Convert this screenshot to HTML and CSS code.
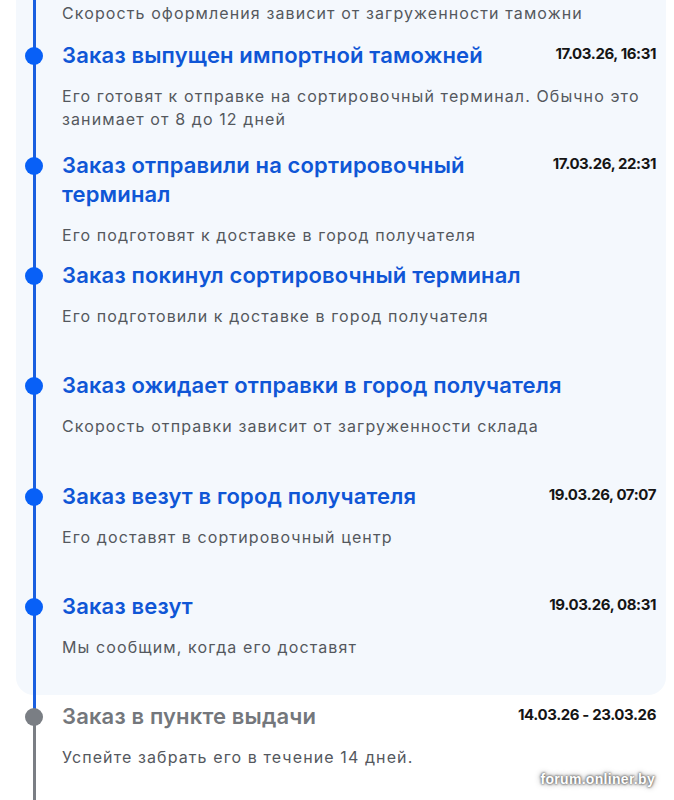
FILE: index.html
```html
<!DOCTYPE html>
<html lang="ru">
<head>
<meta charset="utf-8">
<title>Отслеживание заказа</title>
<link rel="stylesheet" href="styles.css">
</head>
<body>
<div class="page">
  <div class="card">
    <div class="item item--lead">
      <p class="desc">Скорость оформления зависит от загруженности таможни</p>
    </div>
    <div class="item">
      <div class="head"><h3 class="title">Заказ выпущен импортной таможней</h3><span class="date">17.03.26, 16:31</span></div>
      <p class="desc">Его готовят к отправке на сортировочный терминал. Обычно это занимает от 8 до 12 дней</p>
    </div>
    <div class="item">
      <div class="head"><h3 class="title">Заказ отправили на сортировочный терминал</h3><span class="date">17.03.26, 22:31</span></div>
      <p class="desc">Его подготовят к доставке в город получателя</p>
    </div>
    <div class="item">
      <div class="head"><h3 class="title">Заказ покинул сортировочный терминал</h3></div>
      <p class="desc">Его подготовили к доставке в город получателя</p>
    </div>
    <div class="item">
      <div class="head"><h3 class="title">Заказ ожидает отправки в город получателя</h3></div>
      <p class="desc">Скорость отправки зависит от загруженности склада</p>
    </div>
    <div class="item">
      <div class="head"><h3 class="title">Заказ везут в город получателя</h3><span class="date">19.03.26, 07:07</span></div>
      <p class="desc">Его доставят в сортировочный центр</p>
    </div>
    <div class="item item--last">
      <div class="head"><h3 class="title">Заказ везут</h3><span class="date">19.03.26, 08:31</span></div>
      <p class="desc">Мы сообщим, когда его доставят</p>
    </div>
  </div>
  <div class="item item--pending">
    <div class="head"><h3 class="title">Заказ в пункте выдачи</h3><span class="date">14.03.26 - 23.03.26</span></div>
    <p class="desc">Успейте забрать его в течение 14 дней.</p>
  </div>
  <div class="watermark">forum.onliner.by</div>
</div>
</body>
</html>
```
FILE: styles.css
```css
* { box-sizing: border-box; }
html, body { margin: 0; padding: 0; background: #ffffff; }
body { height: 800px; overflow: hidden; font-family: Inter, "Noto Sans", sans-serif; }

.page { position: relative; display: flow-root; height: 800px; }

.card {
  margin: -20px 8px 0 16px;
  padding-top: 20px;
  background: #f4f8fd;
  border-radius: 0 0 18px 18px;
}

.item {
  position: relative;
  min-height: 110.33px;
  padding: 0 10px 0 46px;
}
.item::before {
  content: "";
  position: absolute;
  left: 16.5px;
  top: 0;
  bottom: 0;
  width: 3px;
  background: #1a5fe0;
}
.head::before {
  content: "";
  position: absolute;
  left: 9px;
  top: 6px;
  width: 18px;
  height: 18px;
  border-radius: 50%;
  background: #0860f7;
}

.item--lead { min-height: 40.5px; padding-top: 1.5px; }
.item--last { min-height: 102.5px; }

.item--pending {
  margin: 0 8px 0 16px;
  padding-top: 7.5px;
  min-height: 105px;
}
.item--pending::before {
  background: linear-gradient(#1a5fe0 0 16px, #7a7e84 16px);
}
.item--pending .head::before { top: 13.5px; background: #7a7e84; }

.head {
  display: flex;
  align-items: flex-start;
  justify-content: space-between;
  gap: 24px;
}
.title {
  margin: 0;
  font-size: 22px;
  line-height: 29px;
  font-weight: 600;
  color: #0f56d6;
  letter-spacing: 0.15px;
}
.item--pending .title { color: #74777c; }

.date {
  flex: none;
  font-size: 15px;
  line-height: 26px;
  font-weight: 700;
  color: #151515;
  letter-spacing: -0.4px;
}

.desc {
  margin: 15px 0 0;
  font-size: 16px;
  line-height: 23px;
  color: #54585e;
  letter-spacing: 1.1px;
}
.item--lead .desc { margin-top: 0; }

.watermark {
  position: absolute;
  right: 19px;
  bottom: 13px;
  font-family: "Liberation Sans", Arial, sans-serif;
  font-weight: 700;
  font-size: 14px;
  color: #ffffff;
  text-shadow: 0 0 3px #5f5f5f, 0 0 6px #8a8a8a, 0 0 2px #555;
  letter-spacing: 0.3px;
}
```
